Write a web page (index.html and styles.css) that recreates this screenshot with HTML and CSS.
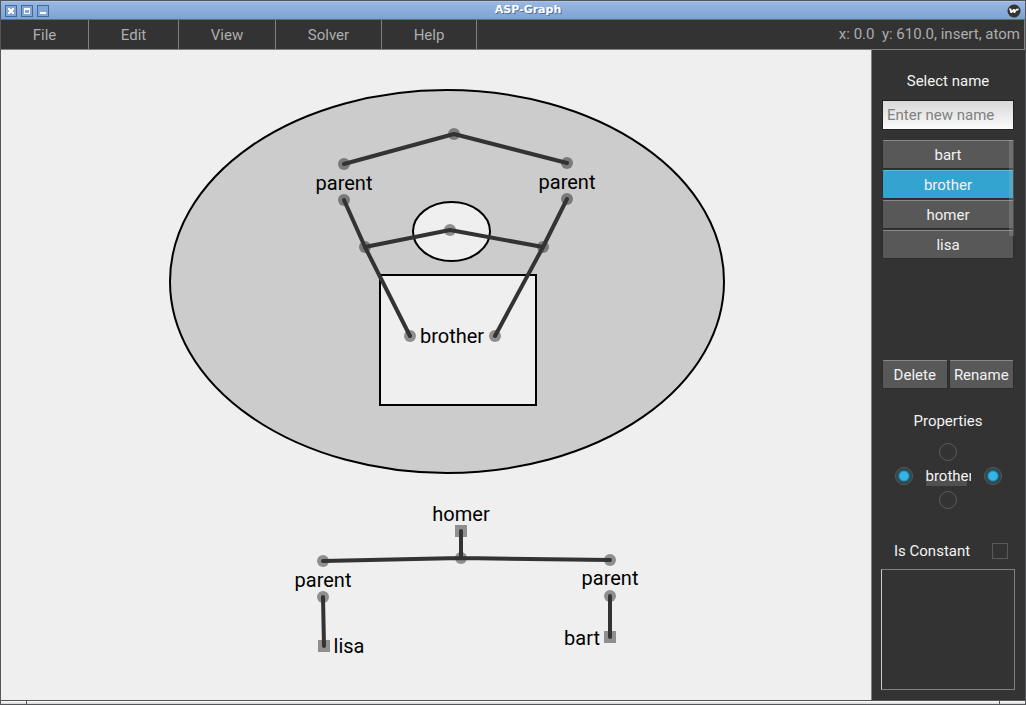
FILE: index.html
```html
<!DOCTYPE html>
<html lang="en">
<head>
<meta charset="utf-8">
<title>ASP-Graph</title>
<link rel="stylesheet" href="styles.css">
</head>
<body>
<div class="window">
  <header class="titlebar">
    <div class="window-buttons">
      <button class="window-button" aria-label="Close"><svg width="8" height="8" viewBox="0 0 8 8"><path d="M1 1h2v1h2V1h2v2H6v2h1v2H5V6H3v1H1V5h1V3H1z" fill="#fff"/></svg></button>
      <button class="window-button" aria-label="Maximize"><svg width="8" height="8" viewBox="0 0 8 8"><path d="M1 1h6v6H1zM2 3v3h4V3z" fill="#fff" fill-rule="evenodd"/></svg></button>
      <button class="window-button" aria-label="Minimize"><svg width="8" height="8" viewBox="0 0 8 8"><path d="M1 5h6v2H1z" fill="#fff"/></svg></button>
    </div>
    <h1 class="window-title">ASP-Graph</h1>
    <svg class="window-logo" width="14" height="14" viewBox="0 0 14 14"><circle cx="7" cy="7" r="6.5" fill="#333"/><path d="M2 4.500h2.200l.6 2.300L6.300 5h1.400l.3 1.600L9 4.800h3L11.200 6.400 9.600 6.600 8 9H6.700L6.200 7.600 5 9H3.500z" fill="#fff"/></svg>
  </header>
  <nav class="menubar">
    <button class="menu-item">File</button>
    <button class="menu-item">Edit</button>
    <button class="menu-item">View</button>
    <button class="menu-item">Solver</button>
    <button class="menu-item">Help</button>
    <p class="status">x: 0.0&nbsp; y: 610.0, insert, atom</p>
  </nav>
  <div class="workspace">
    <main class="canvas">
      <svg class="graph" role="img" aria-label="Existential graph">
        <g transform="translate(-1 -50)">
          <g class="regions">
            <ellipse class="odd" cx="447" cy="281.500" rx="277" ry="191.500"/>
            <ellipse class="even" cx="451.500" cy="231.500" rx="38.500" ry="29.500"/>
            <rect class="even" x="380" y="275" width="156" height="130"/>
          </g>
          <g class="nodes">
            <circle cx="344" cy="164" r="6"/><circle cx="454" cy="134" r="6"/><circle cx="567" cy="163" r="6"/>
            <circle cx="344" cy="200" r="6"/><circle cx="365" cy="247" r="6"/><circle cx="410" cy="336" r="6"/>
            <circle cx="567" cy="199" r="6"/><circle cx="543" cy="247" r="6"/><circle cx="495" cy="336" r="6"/>
            <circle cx="450" cy="230" r="6"/><circle cx="461" cy="558" r="6"/>
            <circle cx="323" cy="561" r="6"/><circle cx="610" cy="560" r="6"/>
            <circle cx="323" cy="597" r="6"/><circle cx="610" cy="596" r="6"/>
            <rect x="455" y="525" width="12" height="12"/>
            <rect x="318" y="640" width="12" height="12"/>
            <rect x="604" y="631" width="12" height="12"/>
          </g>
          <g class="edges">
            <path d="M344 164L454 134L567 163"/>
            <path d="M344 200L365 247L410 336"/>
            <path d="M567 199L543 247L495 336"/>
            <path d="M365 247L450 230L543 247"/>
            <path d="M323 561L461 558L610 560M461 531V558"/>
            <path d="M323 597L324 646M610 596V637"/>
          </g>
          <g class="atoms">
            <text x="344" y="190">parent</text>
            <text x="567" y="189">parent</text>
            <text x="452" y="343">brother</text>
            <text x="461" y="521">homer</text>
            <text x="323" y="587">parent</text>
            <text x="610" y="585">parent</text>
            <text x="349" y="653">lisa</text>
            <text x="582" y="645">bart</text>
          </g>
        </g>
      </svg>
    </main>
    <aside class="sidebar">
      <label class="heading" for="new-name">Select name</label>
      <input class="name-input" id="new-name" type="text" placeholder="Enter new name">
      <div class="name-list">
        <button class="button">bart</button>
        <button class="button selected">brother</button>
        <button class="button">homer</button>
        <button class="button">lisa</button>
        <div class="scroll-thumb"></div>
      </div>
      <div class="actions">
        <button class="button">Delete</button>
        <button class="button">Rename</button>
      </div>
      <h2 class="heading properties-title">Properties</h2>
      <div class="ports">
        <input class="port top" type="checkbox" aria-label="Top port">
        <input class="port left" type="checkbox" aria-label="Left port" checked>
        <span class="port-name">brother</span>
        <input class="port right" type="checkbox" aria-label="Right port" checked>
        <input class="port bottom" type="checkbox" aria-label="Bottom port">
      </div>
      <div class="constant">
        <label for="is-constant">Is Constant</label>
        <input class="tick" id="is-constant" type="checkbox">
      </div>
      <div class="preview"></div>
    </aside>
  </div>
  <footer class="resize-bar"><span class="grip"></span><span class="grip-middle"></span><span class="grip"></span></footer>
</div>
</body>
</html>
```
FILE: styles.css
```css
* { box-sizing: border-box; }

body {
  margin: 0;
  font: 15px/20px Roboto, sans-serif;
  color: #f2f2f2;
}

button, input {
  margin: 0;
  padding: 0;
  border: 0;
  font: inherit;
  color: inherit;
}

.window {
  display: flex;
  flex-direction: column;
  min-height: 100vh;
  border: 1px solid #555659;
  background: #333;
}

.titlebar {
  display: flex;
  align-items: center;
  height: 19px;
  padding: 0 4px;
  border-top: 1px solid #a9c5ea;
  border-bottom: 1px solid #4a72a8;
  background: linear-gradient(#98b7e3, #7da3d3);
}

.window-buttons { display: flex; gap: 4px; }

.window-button {
  display: flex;
  align-items: center;
  justify-content: center;
  width: 12px;
  height: 12px;
  border: 1px solid #42699c;
  background: #82a6d6;
}

.window-title {
  flex: 1;
  margin: 0;
  padding-bottom: 2px;
  font: bold 11px/14px "DejaVu Sans", sans-serif;
  text-align: center;
  color: #fff;
  text-shadow: 1px 1px 0 #506f9b;
}

.menubar {
  display: grid;
  grid-template-columns: 88px 90px 97px 106px 95px 1fr;
  align-items: stretch;
  height: 30px;
  border-right: 1px solid #808080;
  border-bottom: 1px solid #808080;
  color: #adadad;
}

.menu-item {
  border-right: 1px solid #808080;
  background: #333;
}

.status { margin: 0 4px 0 0; line-height: 29px; text-align: right; }

.workspace { display: flex; flex: 1; }

.canvas {
  display: flex;
  flex: 1;
  min-width: 0;
  background: #efefef;
}

.graph { width: 100%; height: auto; }
.regions { stroke: #000; stroke-width: 2; }
.odd { fill: #ccc; }
.even { fill: #efefef; }
.nodes { fill: #000; fill-opacity: .4; }
.edges { fill: none; stroke: #333; stroke-width: 4; stroke-linecap: round; stroke-linejoin: round; }
.atoms { fill: #000; font-size: 20px; text-anchor: middle; }

.sidebar {
  display: flex;
  flex-direction: column;
  width: 154px;
  padding: 21px 11px 10px 10px;
  border-left: 1px solid #808080;
  background: #333;
}

.heading { margin: 0; font-size: 15px; font-weight: 400; text-align: center; }

.name-input {
  height: 30px;
  margin-top: 9px;
  padding: 0 4px;
  border: 1px solid #222;
  background: linear-gradient(#d8d8d8, #fbfbfb);
  color: #222;
}

.name-input::placeholder { color: #808080; opacity: 1; }

.name-list {
  position: relative;
  display: flex;
  flex-direction: column;
  gap: 1px;
  height: 210px;
  margin-top: 10px;
}

.scroll-thumb {
  position: absolute;
  top: 0;
  right: 0;
  width: 5px;
  height: 96px;
  background: rgba(179, 179, 179, .25);
}

.button {
  height: 29px;
  border: 1px solid #2c2c2c;
  border-top-color: #888;
  border-radius: 2px;
  background: #585858;
}

.selected { border-top-color: #5ab9dd; background: #33a3d0; }

.actions {
  display: grid;
  grid-template-columns: 1fr 1fr;
  gap: 1px;
  margin-top: 10px;
}

.properties-title { margin-top: 22px; }

.ports {
  display: grid;
  grid-template-columns: 44px 45px 44px;
  grid-template-rows: 22px 26px 22px;
  grid-template-areas: ". top ." "left name right" ". bottom .";
  justify-content: center;
  place-items: center;
  margin-top: 10px;
}

.port {
  appearance: none;
  width: 18px;
  height: 18px;
  border: 1px solid #5a5a5a;
  border-radius: 50%;
}

.port:checked {
  background: radial-gradient(circle, #33b5e5 4px, #28505f 6px, #2c4149 8px);
}

.top { grid-area: top; }
.left { grid-area: left; }
.right { grid-area: right; }
.bottom { grid-area: bottom; }

.port-name {
  grid-area: name;
  width: 45px;
  overflow: hidden;
  background: linear-gradient(#505050, #505050) 0 13px / 41px 7px no-repeat;
}

.constant {
  display: flex;
  align-items: center;
  justify-content: space-between;
  margin-top: 30px;
  padding: 0 6px 0 12px;
}

.tick {
  appearance: none;
  width: 16px;
  height: 16px;
  border: 1px solid #5a5a5a;
}

.preview {
  flex: 1;
  min-height: 121px;
  margin: 8px -1px 0;
  border: 1px solid #808080;
  border-left-color: #ccc;
}

.resize-bar {
  display: flex;
  height: 4px;
  gap: 1px;
  border-top: 1px solid #555659;
  background: #555659;
}

.grip, .grip-middle { background: linear-gradient(#fff, #d4d4d4); }
.grip { width: 25px; }
.grip-middle { flex: 1; }
```
